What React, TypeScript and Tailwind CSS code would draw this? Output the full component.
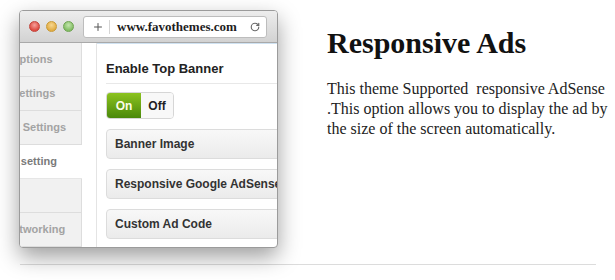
import { Plus, RotateCw } from 'lucide-react'

const sans = { fontFamily: '"Liberation Sans", Arial, sans-serif' }
const serif = { fontFamily: '"Liberation Serif", "Times New Roman", serif' }

const sideItems = [
  { label: 'Options', shift: 'ml-[-9px]' },
  { label: 'Settings', shift: 'ml-[-8px]' },
  { label: 'Ad Settings', shift: 'ml-[-15px]' },
  { label: 'Ads setting', shift: 'ml-[-23px]', active: true },
  { label: '', shift: '' },
  { label: 'Social networking', shift: 'ml-[-49px]' },
]

const panels = ['Banner Image', 'Responsive Google AdSense', 'Custom Ad Code']

function Light({ color }: { color: string }) {
  return <span className={`w-[11px] h-[11px] rounded-full border ${color}`} />
}

function BrowserWindow() {
  return (
    <div className="w-[259px] h-[238px] flex flex-col rounded-[4px] border border-[#9b9b9b] bg-white overflow-hidden shadow-[0_9px_22px_rgba(0,0,0,0.38)]">
      {/* chrome */}
      <div className="h-[32px] shrink-0 flex items-center bg-gradient-to-b from-[#ededed] to-[#d2d2d2] border-b border-[#a9a9a9]">
        <div className="flex items-center gap-[6px] pl-[9px]">
          <Light color="border-[#c2453c] bg-[radial-gradient(circle_at_50%_35%,#f5a09a,#dd4a40_70%)]" />
          <Light color="border-[#c99a36] bg-[radial-gradient(circle_at_50%_35%,#f7d78f,#e2ad44_70%)]" />
          <Light color="border-[#6fa352] bg-[radial-gradient(circle_at_50%_35%,#c4e6ad,#82bd64_70%)]" />
        </div>
        <div className="ml-[9px] w-[184px] h-[22px] flex items-center bg-white rounded-[3px] border border-[#bdbdbd]">
          <Plus size={12} strokeWidth={2} className="ml-[8px] text-[#555]" />
          <span className="ml-[5px] h-[14px] border-l border-[#d5d5d5]" />
          <span className="ml-[7px] text-[13px] font-bold text-[#1d1d1d] leading-none" style={serif}>
            www.favothemes.com
          </span>
          <RotateCw size={10} strokeWidth={2.8} className="ml-auto mr-[6px] text-[#6a6a6a]" />
        </div>
      </div>

      {/* body */}
      <div className="flex flex-1 min-h-0" style={sans}>
        <div className="w-[62px] shrink-0 bg-[#f1f1f1] flex flex-col">
          {sideItems.map((it, i) => (
            <div
              key={i}
              className={`h-[34px] shrink-0 flex items-center overflow-hidden whitespace-nowrap border-b border-[#dddddd] text-[11px] font-bold ${
                it.active ? 'bg-white text-[#7a7a7a] border-b-[#e6e6e6]' : 'border-r border-r-[#dddddd] text-[#a3a3a3]'
              }`}
            >
              <span className={it.shift}>{it.label}</span>
            </div>
          ))}
        </div>
        <div className="w-[14px] shrink-0 bg-white" />
        <div className="flex-1 min-w-0 overflow-hidden border-l border-[#e4e4e4]">
          <div className="h-[1px] bg-[#cfe2f2]" />
          <div className="pl-[9px] w-[220px]">
            <div className="h-[40px] flex items-end pb-[7px] border-b border-[#e8e8e8] text-[13px] leading-[15px] font-bold text-[#222]">
              Enable Top Banner
            </div>
            <div className="mt-[8px] flex w-[68px] h-[27px] rounded-[4px] overflow-hidden border border-[#d6d6d6] text-[12px] font-bold">
              <span className="w-[34px] flex items-center justify-center text-[#fdfde8] bg-gradient-to-b from-[#8cc31f] to-[#4a890b]">
                On
              </span>
              <span className="flex-1 flex items-center justify-center text-[#222] bg-[#f8f8f8]">Off</span>
            </div>
            <div className="mt-[10px] flex flex-col gap-[10px]">
              {panels.map((p) => (
                <div
                  key={p}
                  className="h-[30px] flex items-center pl-[8px] rounded-[4px] border border-[#dcdcdc] bg-gradient-to-b from-[#f8f8f8] to-[#ebebeb] text-[12px] font-bold text-[#333] whitespace-nowrap"
                >
                  {p}
                </div>
              ))}
            </div>
          </div>
        </div>
      </div>
    </div>
  )
}

export default function App() {
  return (
    <div className="w-[615px] h-[280px] bg-white overflow-hidden">
      <div className="flex pt-[10px] pl-[19px]">
        <BrowserWindow />
        <div className="ml-[49px] pt-[16px]" style={serif}>
          <h1 className="text-[30px] leading-[34px] font-bold text-[#111]">Responsive Ads</h1>
          <p className="mt-[19px] text-[16px] leading-[20px] text-[#222] whitespace-pre">
            {'This theme Supported  responsive AdSense\n.This option allows you to display the ad by\nthe size of the screen automatically.'}
          </p>
        </div>
      </div>
      <div className="ml-[20px] mr-[19px] mt-[16px] border-t border-[#dcdcdc]" />
    </div>
  )
}
